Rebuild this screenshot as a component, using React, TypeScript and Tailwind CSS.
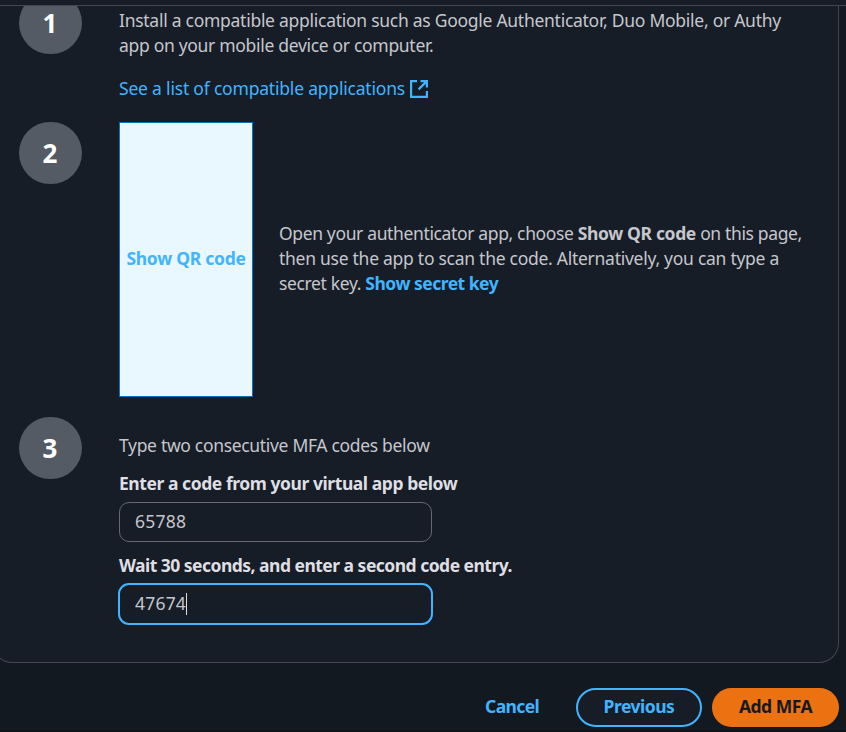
import type { ReactNode } from 'react';

function Step({ n, children, className }: { n: number; children: ReactNode; className: string }) {
  return (
    <section className={`flex items-start ${className}`}>
      <div className="flex h-[62px] w-[63px] shrink-0 items-center justify-center rounded-full bg-[#545b64] pr-px text-[26px] font-bold text-white">
        <span>{n}</span>
      </div>
      <div className="ml-[37px]">{children}</div>
    </section>
  );
}

function ExternalIcon() {
  return (
    <svg width="18" height="18" viewBox="0 0 18 18" fill="none" stroke="#42b4ff" strokeWidth="2.2" className="ml-[5px] shrink-0">
      <path d="M7 1.1H1.1v15.8h15.8V11M10.5 1.1h6.4v6.4M16.9 1.1 8.6 9.4" />
    </svg>
  );
}

export default function App() {
  return (
    <div className="flex h-[732px] w-[846px] flex-col overflow-hidden whitespace-nowrap bg-[#131920] font-['Noto_Sans',sans-serif] text-[17.5px] leading-[25px] text-[#c6c6cd]">
      <div className="h-[6px] shrink-0 border-b border-[#424650] bg-[#161d26]" />
      <main className="-ml-[8px] h-[657px] w-[847px] shrink-0 overflow-hidden rounded-b-[20px] border border-t-0 border-[#424650] bg-[#161d26] pl-[26px]">
        <Step n={1} className="-mt-[14px] h-[130px]">
          <div className="pt-[16px]">
            <p className="tracking-[-0.27px]">Install a compatible application such as Google Authenticator, Duo Mobile, or Authy</p>
            <p className="tracking-[-0.31px]">app on your mobile device or computer.</p>
            <a className="mt-[18px] flex items-center text-[#42b4ff]">
              <span className="tracking-[-0.2px]">See a list of compatible applications</span>
              <ExternalIcon />
            </a>
          </div>
        </Step>
        <Step n={2} className="h-[295px]">
          <div className="flex items-center">
            <button className="h-[275px] w-[134px] border border-[#0073bb] bg-[#e9f8ff] pb-[2px] font-bold tracking-[-0.27px] text-[#42b4ff]">Show QR code</button>
            <div className="ml-[26px] pb-[2px]">
              <p className="tracking-[-0.36px]">Open your authenticator app, choose <b>Show QR code</b> on this page,</p>
              <p className="tracking-[-0.27px]">then use the app to scan the code. Alternatively, you can type a</p>
              <p className="tracking-[-0.36px]">secret key. <b className="tracking-[-0.5px] text-[#42b4ff]">Show secret key</b></p>
            </div>
          </div>
        </Step>
        <Step n={3} className="">
          <div className="pt-[16px]">
            <p className="tracking-[-0.32px]">Type two consecutive MFA codes below</p>
            <p className="mt-[13px] font-bold tracking-[-0.44px] text-[#dedee3]">Enter a code from your virtual app below</p>
            <div className="mt-[6px] flex h-[40px] w-[313px] items-center rounded-[10px] border border-[#656871] pb-[2px] pl-[15px]">
              <span className="tracking-[0.25px]">65788</span>
            </div>
            <p className="mt-[11px] font-bold tracking-[-0.52px] text-[#dedee3]">Wait 30 seconds, and enter a second code entry.</p>
            <div className="-ml-px mt-[5px] flex h-[42px] w-[315px] items-center rounded-[11px] border-2 border-[#42b4ff] pl-[15px]">
              <span className="pb-[2px] tracking-[0.2px]">47674</span>
              <i className="h-[22px] w-px bg-[#dedee3]" />
            </div>
          </div>
        </Step>
      </main>
      <footer className="flex h-[69px] items-center border-b-2 border-[#0f141a] pl-[485px] pt-[22px] font-bold text-[#42b4ff]">
        <span className="w-[91px] pb-[2px] tracking-[-0.6px]">Cancel</span>
        <button className="h-[39px] w-[126px] rounded-full border-2 border-[#42b4ff] bg-[#161d26] pb-[2px] tracking-[-0.5px]">Previous</button>
        <button className="ml-[10px] h-[39px] w-[127px] rounded-full bg-[#ec7211] pb-[2px] tracking-[-0.5px] text-[#16191f]">Add MFA</button>
      </footer>
    </div>
  );
}
